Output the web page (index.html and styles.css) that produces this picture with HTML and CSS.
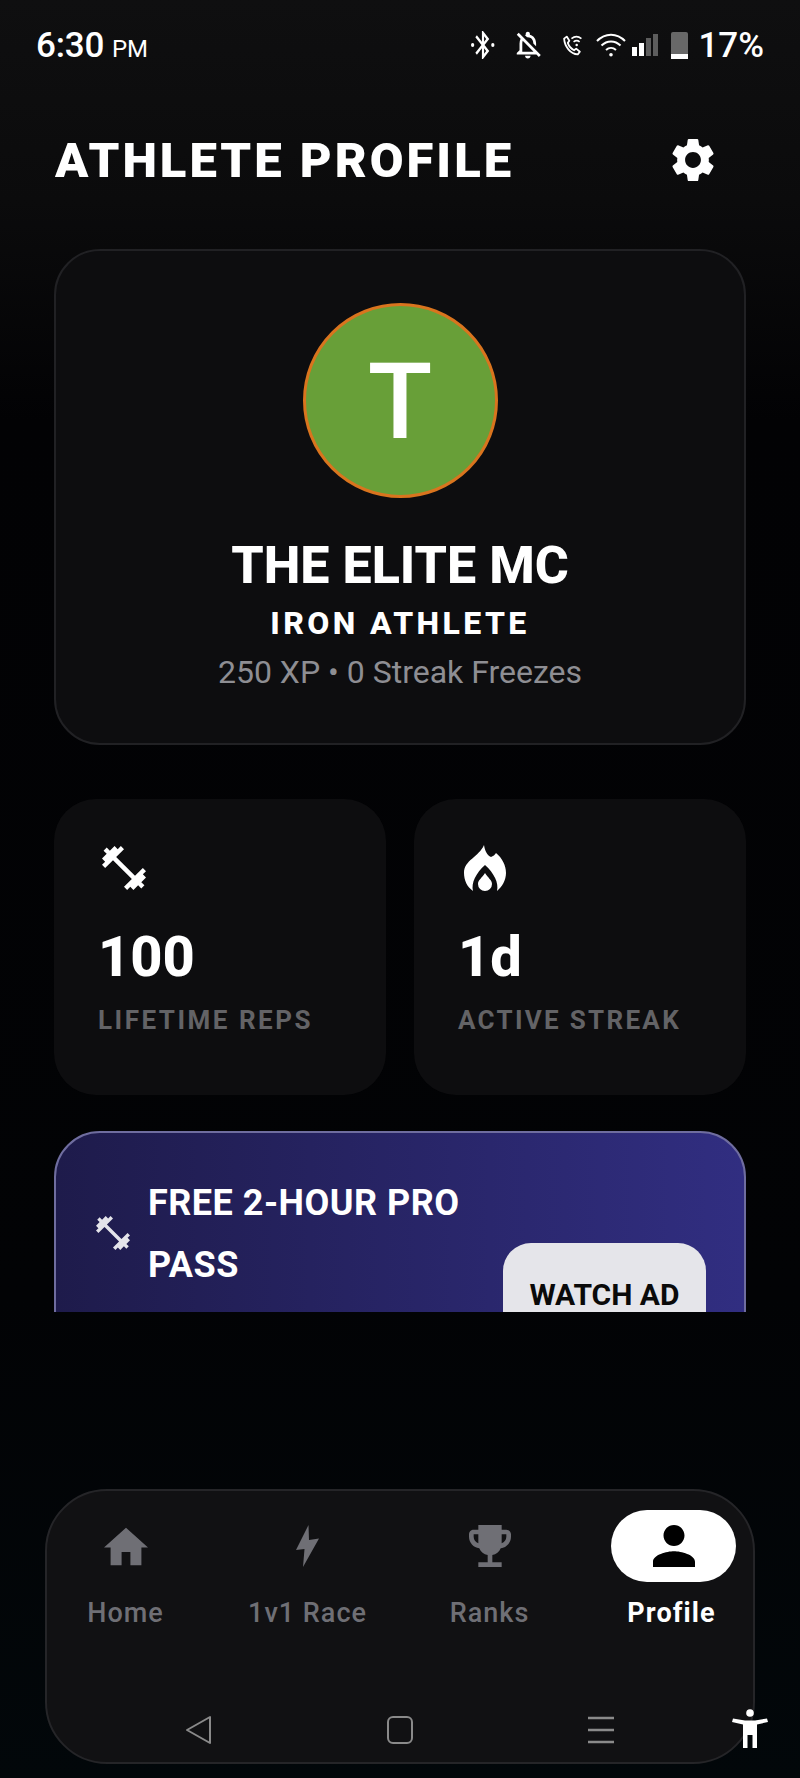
FILE: index.html
```html
<!DOCTYPE html>
<html lang="en">
<head>
    <meta charset="UTF-8">
    <meta name="viewport" content="width=device-width, initial-scale=1.0">
    <title>Athlete Profile</title>
    <link rel="stylesheet" href="styles.css">
</head>
<body>
    <!-- Status bar -->
    <div class="status-bar">
        <div class="clock">6:30<span class="clock-suffix">PM</span></div>
        <div class="status-icons">
            <svg class="icon-bt" viewBox="1 4 22 20" preserveAspectRatio="none" fill="#fff"><path d="M17.71 9.71L12 4h-1v7.59L6.41 7 5 8.41 10.59 14 5 19.59 6.41 21 11 16.41V24h1l5.71-5.71-4.3-4.29 4.3-4.29zM13 7.83l1.88 1.88L13 11.59V7.83zm1.88 10.46L13 20.17v-3.76l1.88 1.88z"/><circle cx="2.5" cy="14" r="1.5"/><circle cx="21" cy="14" r="1.5"/></svg>
            <svg class="icon-bell" viewBox="3 2 19 21" fill="#fff"><path d="M12 22c1.1 0 2-.9 2-2h-4c0 1.1.9 2 2 2zm0-15.5c2.49 0 4 2.02 4 4.5v.1l2 2V11c0-3.07-1.63-5.64-4.5-6.32V4c0-.83-.67-1.5-1.5-1.5s-1.5.67-1.5 1.5v.68c-.24.06-.47.15-.69.23l1.64 1.64c.18-.02.36-.05.55-.05zM5.41 3.35L4 4.76l2.81 2.81C6.29 8.57 6 9.74 6 11v5l-2 2v1h14.24l1.74 1.74 1.41-1.41L5.41 3.35zM16 17H8v-6c0-.68.12-1.32.34-1.9L16 16.76V17z"/></svg>
            <svg class="icon-call" viewBox="0 0 20 20" fill="none" stroke="#fff" stroke-width="1.7"><path d="M2 3.5L4.5 1.5L7 5.5L5.5 7.5C6.5 10.5 8.5 13 11.5 14.5L13.5 13L17 16L15 18.5C8 18 2.500 11 2 3.500Z" stroke-linejoin="round"/><path d="M9 3.500C12 1 15.500 1 18.500 3.500M11 6.500C13 5 15 5 16.800 6.500" stroke-width="1.500"/><circle cx="14" cy="9.500" r="1.200" fill="#fff" stroke="none"/></svg>
            <svg class="icon-wifi" viewBox="0 0 30 24" fill="none" stroke="#fff" stroke-width="2"><path d="M1 8C9-.5 21-.5 29 8M5.500 12.500C11 7 19 7 24.500 12.500M10 17C13 14.300 17 14.300 20 17"/><circle cx="15" cy="21.800" r="1.800" fill="#fff" stroke="none"/></svg>
            <div class="signal">
                <span class="bar bar-1"></span>
                <span class="bar bar-2"></span>
                <span class="bar bar-3 bar-off"></span>
                <span class="bar bar-4 bar-off"></span>
            </div>
            <div class="battery"><span class="battery-fill"></span></div>
            <div class="battery-text">17%</div>
        </div>
    </div>

    <!-- Header -->
    <header class="page-header">
        <h1>ATHLETE PROFILE</h1>
        <svg class="gear" viewBox="2.500 2 19 20" fill="#fff"><path d="M19.14 12.94c.04-.3.06-.61.06-.94 0-.32-.02-.64-.07-.94l2.03-1.58c.18-.14.23-.41.12-.61l-1.92-3.32c-.12-.22-.37-.29-.59-.22l-2.39.96c-.5-.38-1.03-.7-1.62-.94l-.36-2.54c-.04-.24-.24-.41-.48-.41h-3.840c-.24 0-.43.170-.47.410l-.36 2.540c-.59.240-1.130.570-1.620.940l-2.390-.960c-.220-.080-.470 0-.590.220L2.740 8.870c-.120.210-.080.470.120.610l2.030 1.580c-.050.300-.090.630-.090.940s.020.640.070.940l-2.030 1.580c-.180.140-.230.410-.120.610l1.920 3.320c.120.220.370.290.590.220l2.390-.960c.500.380 1.030.700 1.620.940l.360 2.540c.050.240.240.410.480.410h3.840c.240 0 .440-.170.470-.410l.360-2.540c.590-.240 1.130-.560 1.620-.940l2.390.960c.220.080.470 0 .590-.220l1.920-3.320c.120-.220.070-.470-.120-.610l-2.010-1.580zM12 15.600c-1.980 0-3.600-1.620-3.600-3.600s1.620-3.600 3.600-3.600 3.600 1.620 3.600 3.600-1.620 3.600-3.600 3.600z"/></svg>
    </header>

    <!-- Scrolling content, cut off above the tab bar -->
    <main class="content">
        <section class="profile-card">
            <div class="avatar">T</div>
            <div class="profile-name">THE ELITE MC</div>
            <div class="profile-rank">IRON ATHLETE</div>
            <div class="profile-meta">250 XP • 0 Streak Freezes</div>
        </section>

        <section class="stats">
            <div class="stat-card">
                <svg class="stat-icon" viewBox="2 2 20 20" fill="#fff"><path d="M20.570 14.860L22 13.430 20.570 12 17 15.570 8.430 7 12 3.430 10.570 2 9.140 3.430 7.710 2 5.570 4.140 4.140 2.710 2.710 4.140l1.430 1.430L2 7.710l1.430 1.430L2 10.570 3.430 12 7 8.430 15.570 17 12 20.570 13.430 22l1.430-1.430L16.290 22l2.140-2.140 1.430 1.430 1.430-1.430-1.430-1.430L22 16.290z"/></svg>
                <div class="stat-value">100</div>
                <div class="stat-label">LIFETIME REPS</div>
            </div>
            <div class="stat-card">
                <svg class="stat-icon flame" viewBox="0 0 42 46" fill="#fff"><path d="M9 46C3 42 0 35 0 28C0 15 15 12 20 0C21 6 23 10 27 12C29 11 31 10 32 8C38 13 42 20 42 28C42 35 38 42 33 46C35 38 30 28 21 20C12 28 7 38 9 46Z"/><path d="M21 28C24 33 28 35 28 39A7 7 0 0 1 14 39C14 35 18 33 21 28Z"/></svg>
                <div class="stat-value">1d</div>
                <div class="stat-label stat-label-tight">ACTIVE STREAK</div>
            </div>
        </section>

        <section class="promo">
            <svg class="promo-icon" viewBox="2 2 20 20" fill="#e4e4ea"><path d="M20.570 14.860L22 13.430 20.570 12 17 15.570 8.430 7 12 3.430 10.570 2 9.140 3.430 7.710 2 5.570 4.140 4.140 2.710 2.710 4.140l1.430 1.430L2 7.710l1.430 1.430L2 10.570 3.430 12 7 8.430 15.570 17 12 20.570 13.430 22l1.430-1.430L16.290 22l2.140-2.140 1.430 1.430 1.430-1.430-1.430-1.430L22 16.290z"/></svg>
            <div class="promo-title">FREE 2-HOUR PRO PASS</div>
            <div class="promo-button">WATCH AD</div>
        </section>
    </main>

    <!-- Tab bar with the system buttons inside it -->
    <nav class="tab-bar">
        <div class="tabs">
            <div class="tab">
                <div class="tab-icon">
                    <svg class="icon-home" viewBox="2 3 20 17" fill="#6f6f75"><path d="M10 20v-6h4v6h5v-8h3L12 3 2 12h3v8z"/></svg>
                </div>
                <div class="tab-label">Home</div>
            </div>
            <div class="tab">
                <div class="tab-icon">
                    <svg class="icon-bolt" viewBox="0 0 23 42" fill="#6f6f75"><path d="M12.500 0L0 25L8.500 24L7 42L23 13.500L13 15Z"/></svg>
                </div>
                <div class="tab-label">1v1 Race</div>
            </div>
            <div class="tab">
                <div class="tab-icon">
                    <svg class="icon-trophy" viewBox="3 3 18 18" fill="#6f6f75"><path d="M19 5h-2V3H7v2H5c-1.100 0-2 .9-2 2v1c0 2.550 1.920 4.630 4.390 4.940.63 1.500 1.980 2.630 3.610 2.960V19H7v2h10v-2h-4v-3.100c1.630-.33 2.980-1.460 3.610-2.960C19.080 12.630 21 10.550 21 8V7c0-1.100-.9-2-2-2zM5 8V7h2v3.820C5.840 10.400 5 9.300 5 8zm14 0c0 1.300-.84 2.400-2 2.820V7h2v1z"/></svg>
                </div>
                <div class="tab-label">Ranks</div>
            </div>
            <div class="tab tab-active">
                <div class="tab-icon">
                    <svg class="icon-person" viewBox="4 4 16 16" fill="#000"><path d="M12 12c2.210 0 4-1.790 4-4s-1.790-4-4-4-4 1.790-4 4 1.790 4 4 4zm0 2c-2.670 0-8 1.340-8 4v2h16v-2c0-2.660-5.330-4-8-4z"/></svg>
                </div>
                <div class="tab-label">Profile</div>
            </div>
        </div>
        <div class="system-nav">
            <svg class="sys-icon" viewBox="0 0 28 30" fill="none" stroke="#8a8a8a" stroke-width="2" stroke-linejoin="round"><path d="M25 2V28L2 15Z"/></svg>
            <svg class="sys-icon" viewBox="0 0 28 30" fill="none" stroke="#8a8a8a" stroke-width="2"><rect x="2" y="2" width="24" height="26" rx="5"/></svg>
            <svg class="sys-icon" viewBox="0 0 28 30" fill="none" stroke="#8a8a8a" stroke-width="2.500"><path d="M1 3H27M1 15H27M1 27H27"/></svg>
        </div>
    </nav>

    <!-- Accessibility shortcut floats over the corner of the tab bar -->
    <svg class="a11y" viewBox="0 0 36 39" fill="#fff"><circle cx="18" cy="4" r="3.800"/><path d="M1 9.500L13 11.500H23L35 9.500L36 13L25 15.500V39H20.500V26H15.500V39H11V15.500L0 13Z"/></svg>
</body>
</html>
```

FILE: styles.css
```css
/* General styling */
* {
    box-sizing: border-box;
}
body {
    position: relative;
    display: flex;
    flex-direction: column;
    width: 800px;
    height: 1778px;
    margin: 0;
    overflow: hidden;
    font-family: Roboto, "Liberation Sans", sans-serif;
    color: #fff;
    background: linear-gradient(180deg, #0f0f10 0, #0b0b0c 200px, #020204 420px, #020305 1300px, #02070a 1778px);
}

/* Status bar */
.status-bar {
    display: flex;
    flex: none;
    align-items: center;
    justify-content: space-between;
    height: 90px;
    padding: 0 36px;
}
.clock {
    font-size: 35px;
    font-weight: 500;
    letter-spacing: -0.2px;
}
.clock-suffix {
    margin-left: 8px;
    font-size: 24px;
    font-weight: 400;
}
.status-icons {
    display: flex;
    align-items: center;
}
.icon-bt {
    width: 24px;
    height: 28px;
}
.icon-bell {
    width: 29px;
    height: 29px;
    margin-left: 19px;
}
.icon-call {
    width: 21px;
    height: 21px;
    margin-left: 19px;
}
.icon-wifi {
    width: 30px;
    height: 24px;
    margin-left: 13px;
}
.signal {
    display: flex;
    align-items: flex-end;
    gap: 2px;
    height: 22px;
    margin-left: 6px;
}
.bar {
    width: 5px;
    background-color: #fff;
}
.bar-off {
    background-color: #5d5d5d;
}
.bar-1 { height: 9px; }
.bar-2 { height: 13px; }
.bar-3 { height: 18px; }
.bar-4 { height: 22px; }
.battery {
    display: flex;
    align-items: flex-end;
    width: 17px;
    height: 27px;
    margin-left: 13px;
    background-color: #686868;
    border-radius: 2px;
}
.battery-fill {
    width: 100%;
    height: 5px;
    background-color: #fff;
}
.battery-text {
    margin-left: 10px;
    font-size: 35px;
    font-weight: 500;
}

/* Header */
.page-header {
    display: flex;
    flex: none;
    align-items: center;
    justify-content: space-between;
    height: 140px;
    padding: 0 86px 0 55px;
}
h1 {
    margin: 0;
    font-size: 49px;
    font-weight: 900;
    letter-spacing: 3px;
}
.gear {
    width: 42px;
    height: 44px;
}

/* Scrolling content */
.content {
    display: flex;
    flex: none;
    flex-direction: column;
    height: 1063px;
    margin-top: 19px;
    padding: 0 54px;
    overflow: hidden;
}
.profile-card {
    display: flex;
    flex: none;
    flex-direction: column;
    align-items: center;
    height: 496px;
    padding-top: 52px;
    background-color: #0d0d0f;
    border: 2px solid #212124;
    border-radius: 46px;
}
.avatar {
    display: flex;
    align-items: center;
    justify-content: center;
    width: 195px;
    height: 195px;
    padding-top: 2px;
    font-size: 106px;
    font-weight: 500;
    background-color: #689f38;
    border: 3px solid #d9741e;
    border-radius: 50%;
}
.profile-name {
    margin-top: 36px;
    font-size: 52px;
    font-weight: 800;
    line-height: 64px;
}
.profile-rank {
    margin-top: 2px;
    font-size: 32px;
    font-weight: 800;
    line-height: 46px;
    letter-spacing: 3.4px;
}
.profile-meta {
    margin-top: 6px;
    font-size: 32px;
    line-height: 40px;
    color: #8e8e93;
}

/* Stat cards */
.stats {
    display: grid;
    flex: none;
    grid-template-columns: 1fr 1fr;
    gap: 28px;
    margin-top: 54px;
}
.stat-card {
    height: 296px;
    padding: 46px 44px 0;
    background-color: #0d0d0f;
    border-radius: 42px;
}
.stat-icon {
    display: block;
    width: 44px;
    height: 46px;
    margin-left: 4px;
}
.flame {
    width: 42px;
    margin-left: 6px;
}
.stat-value {
    margin-top: 33px;
    font-size: 56px;
    font-weight: 800;
    line-height: 66px;
}
.stat-label {
    margin-top: 13px;
    font-size: 26px;
    font-weight: 700;
    line-height: 34px;
    letter-spacing: 2.5px;
    color: #636366;
}
.stat-label-tight {
    letter-spacing: 2.3px;
}

/* Promo card */
.promo {
    display: flex;
    flex: none;
    align-items: flex-start;
    height: 240px;
    margin-top: 36px;
    padding: 39px 38px 0 40px;
    background: linear-gradient(90deg, #1e1b4b, #312e81);
    border: 2px solid #6f6d9f;
    border-radius: 46px;
}
.promo-icon {
    flex: none;
    width: 34px;
    height: 34px;
    margin-top: 44px;
}
.promo-title {
    flex: none;
    width: 345px;
    margin-left: 18px;
    font-size: 36px;
    font-weight: 700;
    line-height: 62px;
    letter-spacing: 0.5px;
}
.promo-button {
    flex: none;
    width: 203px;
    height: 110px;
    margin-top: 71px;
    margin-left: auto;
    padding-top: 37px;
    font-size: 30px;
    font-weight: 700;
    line-height: 30px;
    text-align: center;
    color: #0a0a0a;
    background-color: #e5e5ea;
    border-radius: 28px;
}

/* Tab bar */
.tab-bar {
    display: flex;
    flex: none;
    flex-direction: column;
    height: 275px;
    margin: auto 45px 14px;
    background-color: #111113;
    border: 2px solid #252528;
    border-radius: 62px;
}
.tabs {
    display: flex;
    justify-content: center;
    padding-top: 19px;
    margin-left: -3px;
}
.tab {
    display: flex;
    flex: none;
    flex-direction: column;
    align-items: center;
    width: 182px;
}
.tab-icon {
    display: flex;
    align-items: center;
    justify-content: center;
    width: 125px;
    height: 72px;
    border-radius: 36px;
}
.tab-active .tab-icon {
    margin-left: 4px;
    background-color: #fff;
}
.tab-label {
    margin-top: 15px;
    font-size: 27px;
    font-weight: 500;
    line-height: 32px;
    letter-spacing: 1px;
    color: #6f6f75;
}
.tab-active .tab-label {
    font-weight: 700;
    letter-spacing: 1.1px;
    color: #fff;
}
.icon-home {
    width: 44px;
    height: 39px;
}
.icon-bolt {
    width: 23px;
    height: 42px;
}
.icon-trophy {
    width: 42px;
    height: 42px;
}
.icon-person {
    width: 42px;
    height: 42px;
}

/* Android buttons */
.system-nav {
    display: flex;
    justify-content: center;
    gap: 173px;
    margin-top: 86px;
}
.sys-icon {
    width: 28px;
    height: 30px;
}
.a11y {
    position: absolute;
    top: 1709px;
    left: 732px;
    width: 36px;
    height: 39px;
}
```
